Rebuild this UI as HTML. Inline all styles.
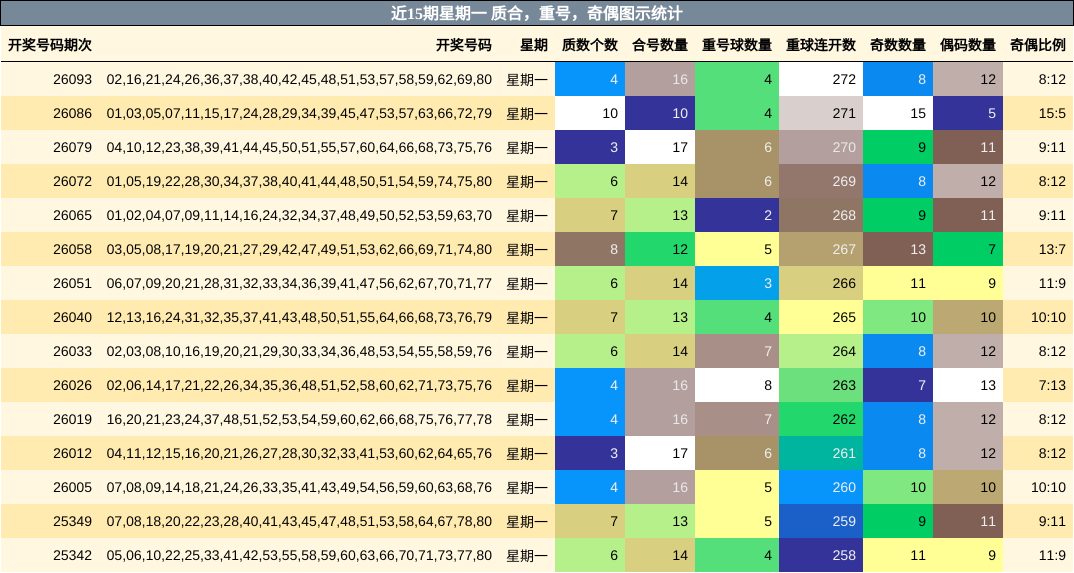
<!DOCTYPE html>
<html><head><meta charset="utf-8">
<style>
html,body{margin:0;padding:0;background:#fff;width:1074px;height:573px;overflow:hidden}
body{font-family:"Liberation Sans","WenQuanYi Zen Hei",sans-serif;font-size:14px;color:#000;font-kerning:none;text-rendering:geometricPrecision}
#t{position:absolute;left:0;top:0;width:1074px;height:26px;box-sizing:border-box;border:1px solid #000;background:#778899;color:#fff;text-align:center;font:bold 16px/28px "Liberation Serif","WenQuanYi Zen Hei",serif;font-kerning:none;overflow:hidden}
table{position:absolute;left:1px;top:26px;width:1072px;table-layout:fixed;border-collapse:separate;border-spacing:0}
th,td{padding:0 7px 0 0;text-align:right;white-space:nowrap;overflow:hidden;height:34px;box-sizing:border-box;font-weight:normal}
th{height:36px;font-weight:bold;background:#fff7e0;border-bottom:1px solid #000;color:#000;padding-top:2px}
td:nth-child(3){padding-top:2px}
tr.o td{background:#fff7e0}
tr.e td{background:#ffeab0}
tr td.a{background:#333399;color:#eee}
tr td.b{background:#0794fb;color:#eee}
tr td.b2{background:#0a89f0;color:#eee}
tr td.c{background:#b3a09e;color:#e8e8e8}
tr td.c2{background:#c0aeaa;color:#000}
tr td.d{background:#55df7a}
tr td.w{background:#fff;color:#000}
tr td.f{background:#8f7563;color:#eee}
tr td.f2{background:#a89268;color:#eee}
tr td.f3{background:#a89088;color:#eee}
tr td.g{background:#b5f08a}
tr td.h{background:#d8d080}
tr td.y{background:#ffff96}
tr td.i{background:#22d86c}
tr td.j{background:#00cd64}
tr td.k{background:#805f55;color:#eee}
tr td.l{background:#05a0ea;color:#eee}
tr td.m{background:#80e880}
tr td.n{background:#bca872}
tr td.p{background:#d9d0ce}
tr td.q{background:#b5a070;color:#eee}
tr td.r{background:#6ce07c}
tr td.s{background:#00b5a0;color:#eee}
tr td.u{background:#1a60c8;color:#eee}
</style></head><body>
<div id="t">近15期星期一 质合，重号，奇偶图示统计</div>
<table>
<colgroup><col style="width:98px"><col style="width:400px"><col style="width:56px"><col style="width:70px"><col style="width:70px"><col style="width:84px"><col style="width:84px"><col style="width:70px"><col style="width:70px"><col style="width:70px"></colgroup>
<tr><th>开奖号码期次</th><th>开奖号码</th><th>星期</th><th>质数个数</th><th>合号数量</th><th>重号球数量</th><th>重球连开数</th><th>奇数数量</th><th>偶码数量</th><th>奇偶比例</th></tr>
<tr class="o"><td>26093</td><td>02,16,21,24,26,36,37,38,40,42,45,48,51,53,57,58,59,62,69,80</td><td>星期一</td><td class="b">4</td><td class="c">16</td><td class="d">4</td><td class="w">272</td><td class="b2">8</td><td class="c2">12</td><td>8:12</td></tr>
<tr class="e"><td>26086</td><td>01,03,05,07,11,15,17,24,28,29,34,39,45,47,53,57,63,66,72,79</td><td>星期一</td><td class="w">10</td><td class="a">10</td><td class="d">4</td><td class="p">271</td><td class="w">15</td><td class="a">5</td><td>15:5</td></tr>
<tr class="o"><td>26079</td><td>04,10,12,23,38,39,41,44,45,50,51,55,57,60,64,66,68,73,75,76</td><td>星期一</td><td class="a">3</td><td class="w">17</td><td class="f2">6</td><td class="c">270</td><td class="j">9</td><td class="k">11</td><td>9:11</td></tr>
<tr class="e"><td>26072</td><td>01,05,19,22,28,30,34,37,38,40,41,44,48,50,51,54,59,74,75,80</td><td>星期一</td><td class="g">6</td><td class="h">14</td><td class="f2">6</td><td class="f" style="background:#93766c">269</td><td class="b2">8</td><td class="c2">12</td><td>8:12</td></tr>
<tr class="o"><td>26065</td><td>01,02,04,07,09,11,14,16,24,32,34,37,48,49,50,52,53,59,63,70</td><td>星期一</td><td class="h">7</td><td class="g">13</td><td class="a">2</td><td class="f">268</td><td class="j">9</td><td class="k">11</td><td>9:11</td></tr>
<tr class="e"><td>26058</td><td>03,05,08,17,19,20,21,27,29,42,47,49,51,53,62,66,69,71,74,80</td><td>星期一</td><td class="f">8</td><td class="i">12</td><td class="y">5</td><td class="q">267</td><td class="k">13</td><td class="j">7</td><td>13:7</td></tr>
<tr class="o"><td>26051</td><td>06,07,09,20,21,28,31,32,33,34,36,39,41,47,56,62,67,70,71,77</td><td>星期一</td><td class="g">6</td><td class="h">14</td><td class="l">3</td><td class="h">266</td><td class="y">11</td><td class="y">9</td><td>11:9</td></tr>
<tr class="e"><td>26040</td><td>12,13,16,24,31,32,35,37,41,43,48,50,51,55,64,66,68,73,76,79</td><td>星期一</td><td class="h">7</td><td class="g">13</td><td class="d">4</td><td class="y">265</td><td class="m">10</td><td class="n">10</td><td>10:10</td></tr>
<tr class="o"><td>26033</td><td>02,03,08,10,16,19,20,21,29,30,33,34,36,48,53,54,55,58,59,76</td><td>星期一</td><td class="g">6</td><td class="h">14</td><td class="f3">7</td><td class="g">264</td><td class="b2">8</td><td class="c2">12</td><td>8:12</td></tr>
<tr class="e"><td>26026</td><td>02,06,14,17,21,22,26,34,35,36,48,51,52,58,60,62,71,73,75,76</td><td>星期一</td><td class="b">4</td><td class="c">16</td><td class="w">8</td><td class="r">263</td><td class="a">7</td><td class="w">13</td><td>7:13</td></tr>
<tr class="o"><td>26019</td><td>16,20,21,23,24,37,48,51,52,53,54,59,60,62,66,68,75,76,77,78</td><td>星期一</td><td class="b">4</td><td class="c">16</td><td class="f3">7</td><td class="i">262</td><td class="b2">8</td><td class="c2">12</td><td>8:12</td></tr>
<tr class="e"><td>26012</td><td>04,11,12,15,16,20,21,26,27,28,30,32,33,41,53,60,62,64,65,76</td><td>星期一</td><td class="a">3</td><td class="w">17</td><td class="f2">6</td><td class="s">261</td><td class="b2">8</td><td class="c2">12</td><td>8:12</td></tr>
<tr class="o"><td>26005</td><td>07,08,09,14,18,21,24,26,33,35,41,43,49,54,56,59,60,63,68,76</td><td>星期一</td><td class="b">4</td><td class="c">16</td><td class="y">5</td><td class="b">260</td><td class="m">10</td><td class="n">10</td><td>10:10</td></tr>
<tr class="e"><td>25349</td><td>07,08,18,20,22,23,28,40,41,43,45,47,48,51,53,58,64,67,78,80</td><td>星期一</td><td class="h">7</td><td class="g">13</td><td class="y">5</td><td class="u">259</td><td class="j">9</td><td class="k">11</td><td>9:11</td></tr>
<tr class="o"><td>25342</td><td>05,06,10,22,25,33,41,42,53,55,58,59,60,63,66,70,71,73,77,80</td><td>星期一</td><td class="g">6</td><td class="h">14</td><td class="d">4</td><td class="a">258</td><td class="y">11</td><td class="y">9</td><td>11:9</td></tr>
</table>
</body></html>
